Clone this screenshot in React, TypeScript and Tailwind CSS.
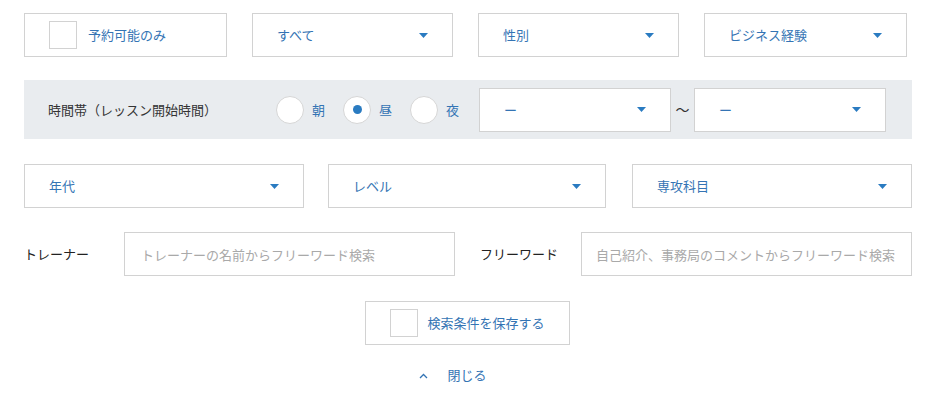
import React from "react";

const font = "font-['Noto_Sans_CJK_JP','Noto_Sans',sans-serif]";

const Caret = () => (
  <svg width="9" height="5" viewBox="0 0 9 5" className="shrink-0">
    <path d="M0 0H9L4.5 5Z" fill="#2a7bc1" />
  </svg>
);

const SelectBox = ({ label, className }: { label: string; className: string }) => (
  <div
    className={`flex h-[44px] items-center justify-between border border-[#d2d2d2] bg-white pl-[24px] pr-[24px] ${className}`}
  >
    <span className="text-[13px] text-[#3474b4]">{label}</span>
    <Caret />
  </div>
);

const Radio = ({ label, checked }: { label: string; checked?: boolean }) => (
  <label className="flex items-center gap-[8px]">
    <span className="flex h-[28px] w-[28px] items-center justify-center rounded-full border border-[#d6d6d6] bg-white">
      {checked && <span className="h-[9px] w-[9px] rounded-full bg-[#2a7bc1]" />}
    </span>
    <span className="text-[13px] text-[#3474b4]">{label}</span>
  </label>
);

export default function App() {
  return (
    <div className={`${font} w-[931px] bg-white pl-[24px] pr-[19px] pt-[13px]`}>
      <div className="flex gap-[25px]">
        <div className="flex h-[44px] w-[203px] items-center border border-[#d2d2d2] bg-white pl-[24px]">
          <span className="h-[28px] w-[28px] border border-[#d2d2d2] bg-white" />
          <span className="ml-[11px] text-[13px] text-[#3474b4]">予約可能のみ</span>
        </div>
        <SelectBox label="すべて" className="w-[201px]" />
        <SelectBox label="性別" className="w-[201px]" />
        <SelectBox label="ビジネス経験" className="w-[203px]" />
      </div>

      <div className="mt-[23px] flex h-[59px] items-center bg-[#e9ecef] pl-[24px]">
        <span className="w-[228px] text-[13px] text-[#333]">時間帯（レッスン開始時間）</span>
        <div className="flex gap-[18px]">
          <Radio label="朝" />
          <Radio label="昼" checked />
          <Radio label="夜" />
        </div>
        <div className="ml-[20px] flex items-center">
          <SelectBox label="ー" className="w-[192px]" />
          <span className="w-[23px] text-center text-[14px] text-[#333]">〜</span>
          <SelectBox label="ー" className="w-[192px]" />
        </div>
      </div>

      <div className="mt-[25px] flex">
        <SelectBox label="年代" className="w-[280px]" />
        <SelectBox label="レベル" className="ml-[24px] w-[278px]" />
        <SelectBox label="専攻科目" className="ml-[26px] w-[280px]" />
      </div>

      <div className="mt-[24px] flex items-center">
        <span className="w-[100px] text-[13px] text-[#222]">トレーナー</span>
        <input
          className="h-[44px] w-[331px] border border-[#d2d2d2] px-[16px] text-[13px] outline-none placeholder:text-[#a9a9a9]"
          placeholder="トレーナーの名前からフリーワード検索"
        />
        <span className="ml-[25px] w-[101px] text-[13px] text-[#222]">フリーワード</span>
        <input
          className="h-[44px] w-[331px] border border-[#d2d2d2] px-[14px] text-[13px] outline-none placeholder:text-[#a9a9a9]"
          placeholder="自己紹介、事務局のコメントからフリーワード検索"
        />
      </div>

      <div className="mt-[25px] flex justify-center pr-[2px]">
        <div className="flex h-[44px] w-[205px] items-center border border-[#d2d2d2] bg-white pl-[24px]">
          <span className="h-[28px] w-[28px] border border-[#d2d2d2] bg-white" />
          <span className="ml-[10px] text-[13px] text-[#3474b4]">検索条件を保存する</span>
        </div>
      </div>

      <div className="mt-[20px] flex h-[28px] items-start justify-center pr-[30px]">
        <svg width="9" height="6" viewBox="0 0 9 6" className="mt-[8px]">
          <path d="M1 5L4.5 1.5L8 5" fill="none" stroke="#3474b4" strokeWidth="1.3" />
        </svg>
        <span className="ml-[19px] text-[13px] text-[#3474b4]">閉じる</span>
      </div>
    </div>
  );
}
